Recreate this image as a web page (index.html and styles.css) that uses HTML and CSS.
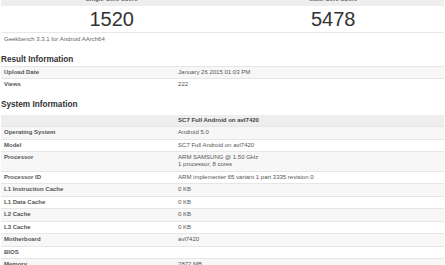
FILE: index.html
```html
<!DOCTYPE html>
<html>
<head>
<meta charset="utf-8">
<link rel="stylesheet" href="styles.css">
</head>
<body>
<div class="page">
  <table class="scores">
    <thead>
      <tr><th>Single-Core Score</th><th>Multi-Core Score</th></tr>
    </thead>
    <tbody>
      <tr><td>1520</td><td>5478</td></tr>
    </tbody>
  </table>
  <p class="note">Geekbench 3.3.1 for Android AArch64</p>

  <h3 class="heading heading-result">Result Information</h3>
  <table class="info">
    <tbody>
      <tr><td class="name">Upload Date</td><td class="value">January 26 2015 01:03 PM</td></tr>
      <tr><td class="name">Views</td><td class="value">222</td></tr>
    </tbody>
  </table>

  <h3 class="heading heading-system">System Information</h3>
  <table class="info">
    <thead>
      <tr><th class="name"></th><th class="value">SC7 Full Android on avl7420</th></tr>
    </thead>
    <tbody>
      <tr><td class="name">Operating System</td><td class="value">Android 5.0</td></tr>
      <tr><td class="name">Model</td><td class="value">SC7 Full Android on avl7420</td></tr>
      <tr><td class="name">Processor</td><td class="value">ARM SAMSUNG @ 1.50 GHz<br>1 processor, 8 cores</td></tr>
      <tr><td class="name">Processor ID</td><td class="value">ARM implementer 65 variant 1 part 3335 revision 0</td></tr>
      <tr><td class="name">L1 Instruction Cache</td><td class="value">0 KB</td></tr>
      <tr><td class="name">L1 Data Cache</td><td class="value">0 KB</td></tr>
      <tr><td class="name">L2 Cache</td><td class="value">0 KB</td></tr>
      <tr><td class="name">L3 Cache</td><td class="value">0 KB</td></tr>
      <tr><td class="name">Motherboard</td><td class="value">avl7420</td></tr>
      <tr><td class="name">BIOS</td><td class="value"></td></tr>
      <tr><td class="name">Memory</td><td class="value">2872 MB</td></tr>
    </tbody>
  </table>
</div>
</body>
</html>
```

FILE: styles.css
```css
html, body {
  margin: 0;
  padding: 0;
  background: #fff;
  font-family: "Liberation Sans", Arial, sans-serif;
  color: #444;
}

.page {
  margin-top: -6.4px;
  padding: 0 1px;
}

table {
  width: 100%;
  border-collapse: collapse;
  border-spacing: 0;
}

.scores th {
  background: #eeeeee;
  font-size: 6px;
  line-height: 7px;
  padding: 2.7px 0;
  color: #666;
  font-weight: bold;
  text-align: center;
  width: 50%;
}

.scores td {
  height: 26px;
  padding: 0;
  font-size: 20px;
  line-height: 26px;
  text-align: center;
  color: #333;
  border-bottom: 1px solid #e8e8e8;
}

.note {
  margin: 3px 0 0 3px;
  font-size: 6px;
  line-height: 7px;
  color: #666;
}

.heading {
  margin: 0;
  font-size: 8.2px;
  line-height: 10px;
  font-weight: bold;
  color: #333;
}

.heading-result {
  margin-top: 12px;
  margin-bottom: 0.7px;
}

.heading-system {
  margin-top: 9.5px;
  margin-bottom: 4.5px;
}

.info td, .info th {
  font-size: 6px;
  line-height: 7px;
  padding: 2.25px 3px;
  border-top: 1px solid #e6e6e6;
  text-align: left;
  vertical-align: top;
}

.info .name {
  width: 39.3%;
  font-weight: bold;
  color: #555;
}

.info .value {
  color: #555;
  font-weight: normal;
}

.info thead th {
  background: #eeeeee;
  border-top: none;
}

.info thead th.value {
  font-weight: bold;
  color: #444;
}

.info tbody tr:nth-child(odd) {
  background: #f7f7f7;
}
```
